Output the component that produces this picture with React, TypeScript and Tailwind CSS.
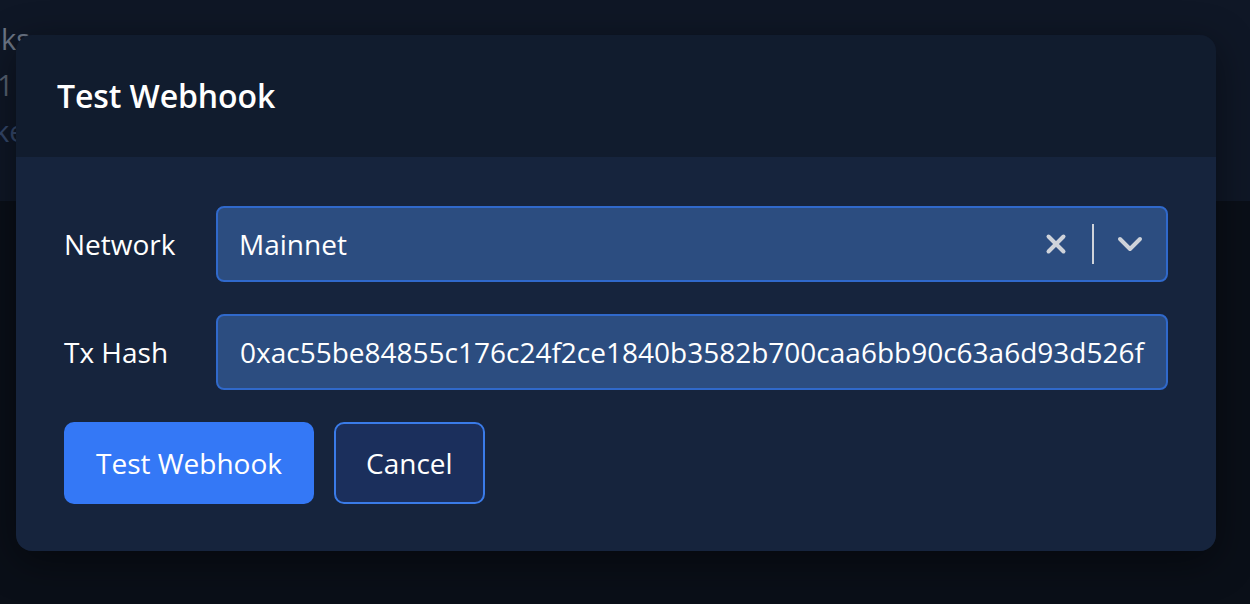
import { X, ChevronDown } from "lucide-react";

const font = { fontFamily: '"Open Sans", "Noto Sans", sans-serif' };

export default function App() {
  const txHash = "0xac55be84855c176c24f2ce1840b3582b700caa6bb90c63a6d93d526f";

  return (
    <div className="relative h-[604px] w-[1250px] overflow-hidden bg-[#0a0f18]" style={font}>
      {/* Page behind the overlay */}
      <div className="h-[201px] bg-[#0f1726] pt-[20px] flex flex-col gap-[8px] text-[29px] leading-[38px]">
        <span className="ml-[1px] text-[#6b7585]">ks</span>
        <span className="ml-[-3px] text-[#566070]">1</span>
        <span className="ml-[-6px] text-[#34476a]">ke</span>
      </div>

      {/* Dialog */}
      <div className="absolute left-[16px] top-[35px] w-[1200px] rounded-[16px] overflow-hidden shadow-[0_10px_40px_rgba(0,0,0,0.45)]">
        <div className="h-[122px] bg-[#111c2e] flex items-center px-[41px]">
          <h2 className="text-[32px] font-semibold text-white tracking-[-0.1px]">Test Webhook</h2>
        </div>

        <div className="bg-[#16243d] px-[48px] pt-[49px] pb-[47px] flex flex-col gap-[32px]">
          <div className="flex items-center">
            <label className="w-[152px] shrink-0 text-[28px] text-white">Network</label>
            <div className="flex-1 h-[76px] rounded-[8px] border-2 border-[#3069cb] bg-[#2c4d80] flex items-center pl-[21px] pr-[16px]">
              <span className="flex-1 text-[28px] text-white">Mainnet</span>
              <X className="w-[30px] h-[30px] text-[#cfd3da]" strokeWidth={3.2} />
              <div className="w-[2px] h-[40px] bg-[#cfd3da] ml-[21px] mr-[16px]" />
              <ChevronDown className="w-[40px] h-[40px] text-[#cfd3da]" strokeWidth={2.4} />
            </div>
          </div>

          <div className="flex items-center">
            <label className="w-[152px] shrink-0 text-[28px] text-white">Tx Hash</label>
            <div className="flex-1 h-[76px] rounded-[8px] border-2 border-[#3069cb] bg-[#2c4d80] flex items-center pl-[22px] overflow-hidden">
              <span className="text-[28px] text-white whitespace-nowrap">{txHash}</span>
            </div>
          </div>

          <div className="flex items-center gap-[20px]">
            <button className="h-[82px] px-[32px] rounded-[10px] bg-[#3478f6] text-[28px] text-white">Test Webhook</button>
            <button className="h-[82px] px-[30px] rounded-[10px] border-2 border-[#3a7be8] bg-[#1b2f5c] text-[28px] text-white">Cancel</button>
          </div>
        </div>
      </div>
    </div>
  );
}
